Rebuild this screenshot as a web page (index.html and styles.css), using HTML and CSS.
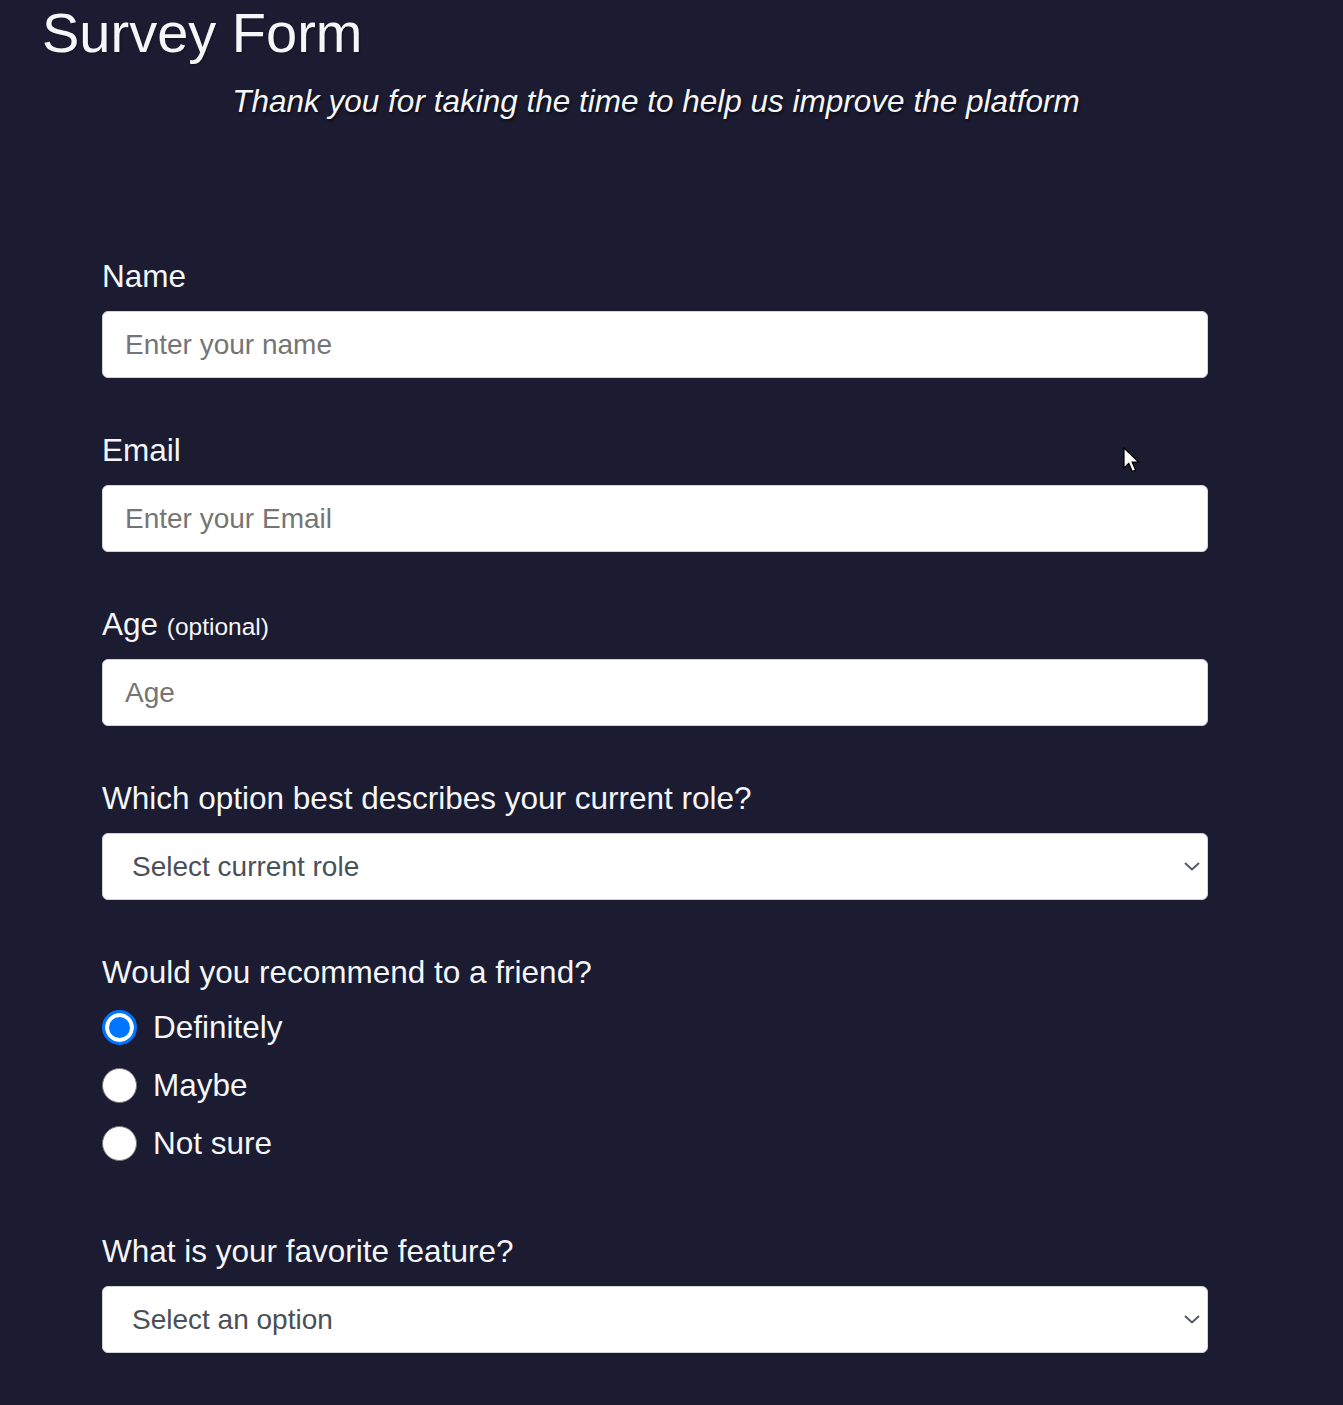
FILE: index.html
```html
<!DOCTYPE html>
<html lang="en">
<head>
<meta charset="utf-8">
<title>Survey Form</title>
<link rel="stylesheet" href="styles.css">
</head>
<body>
<main class="page">
  <h1 class="title">Survey Form</h1>
  <p class="subtitle">Thank you for taking the time to help us improve the platform</p>
  <form class="survey">
    <div class="field">
      <label class="label" for="name">Name</label>
      <input class="control" id="name" type="text" placeholder="Enter your name">
    </div>
    <div class="field">
      <label class="label" for="email">Email</label>
      <input class="control" id="email" type="email" placeholder="Enter your Email">
    </div>
    <div class="field">
      <label class="label" for="age">Age <span class="label-note">(optional)</span></label>
      <input class="control" id="age" type="number" placeholder="Age">
    </div>
    <div class="field">
      <label class="label" for="role">Which option best describes your current role?</label>
      <div class="select-wrap">
        <select class="control control-select" id="role">
          <option>Select current role</option>
          <option>Student</option>
          <option>Full Time Job</option>
          <option>Full Time Learner</option>
          <option>Prefer not to say</option>
          <option>Other</option>
        </select>
        <svg class="chevron" width="16" height="9" viewBox="0 0 16 9"><path d="M1 1 L8 7.5 L15 1" fill="none" stroke="#555a60" stroke-width="2"/></svg>
      </div>
    </div>
    <div class="field field-radios">
      <p class="label label-tight">Would you recommend to a friend?</p>
      <label class="radio-row"><input class="radio" type="radio" name="rec" checked><span>Definitely</span></label>
      <label class="radio-row"><input class="radio" type="radio" name="rec"><span>Maybe</span></label>
      <label class="radio-row"><input class="radio" type="radio" name="rec"><span>Not sure</span></label>
    </div>
    <div class="field">
      <label class="label" for="feature">What is your favorite feature?</label>
      <div class="select-wrap">
        <select class="control control-select" id="feature">
          <option>Select an option</option>
          <option>Challenges</option>
          <option>Projects</option>
          <option>Community</option>
          <option>Open Source</option>
        </select>
        <svg class="chevron" width="16" height="9" viewBox="0 0 16 9"><path d="M1 1 L8 7.5 L15 1" fill="none" stroke="#555a60" stroke-width="2"/></svg>
      </div>
    </div>
  </form>
  <svg class="cursor" width="18" height="27" viewBox="0 0 18 27"><path d="M1 1 V21 L5.8 16.4 L9.3 24.5 L12.6 23.1 L9.1 15.1 H15.6 Z" fill="#fff" stroke="#000" stroke-width="1.2" stroke-linejoin="miter"/></svg>
</main>
</body>
</html>
```

FILE: styles.css
```css
html, body {
  margin: 0;
  padding: 0;
  background: #1b1b32;
}

body {
  font-family: "Liberation Sans", Arial, sans-serif;
  color: #f5f6f7;
  min-height: 1405px;
}

.page {
  position: relative;
  width: 1310px;
}

.title {
  margin: 1px 0 0 0;
  padding-left: 42px;
  font-size: 56px;
  line-height: 64px;
  font-weight: 400;
  text-shadow: 1px 1px 2px rgba(0, 0, 0, 0.35);
}

.subtitle {
  margin: 18px 0 0 0;
  padding-left: 2px;
  font-size: 31.5px;
  line-height: 36px;
  font-style: italic;
  text-align: center;
  text-shadow: 1px 2px 3px rgba(0, 0, 0, 0.6);
}

.survey {
  padding: 139px 102px 40px;
}

.field {
  margin-bottom: 54px;
}

.label {
  display: block;
  margin: 0 0 17px 0;
  font-size: 31.5px;
  line-height: 36px;
}

.label-note {
  font-size: 24.5px;
  line-height: 1;
}

.label-tight {
  margin-bottom: 8px;
}

.control {
  display: block;
  box-sizing: border-box;
  width: 100%;
  height: 67px;
  margin: 0;
  padding: 0 22px;
  border: 1px solid #ced4da;
  border-radius: 6px;
  background: #fff;
  color: #495057;
  font-family: inherit;
  font-size: 28px;
  outline: none;
}

.control::placeholder {
  color: #757575;
  opacity: 1;
}

.control-select {
  appearance: none;
  -webkit-appearance: none;
  padding-left: 29px;
}

.select-wrap {
  position: relative;
}

.chevron {
  position: absolute;
  right: 8px;
  top: 29px;
  pointer-events: none;
}

.field-radios {
  margin-bottom: 61px;
}

.radio-row {
  display: flex;
  align-items: center;
  gap: 16px;
  height: 58px;
  font-size: 31.5px;
}

.radio {
  appearance: none;
  -webkit-appearance: none;
  box-sizing: border-box;
  width: 35px;
  height: 35px;
  margin: 0;
  border-radius: 50%;
  border: 1px solid #767676;
  background: #fff;
  flex: none;
}

.radio:checked {
  border: 3px solid #0075ff;
  background: #0075ff;
  box-shadow: inset 0 0 0 4px #fff;
}

.cursor {
  position: absolute;
  left: 1123px;
  top: 446px;
}
```
